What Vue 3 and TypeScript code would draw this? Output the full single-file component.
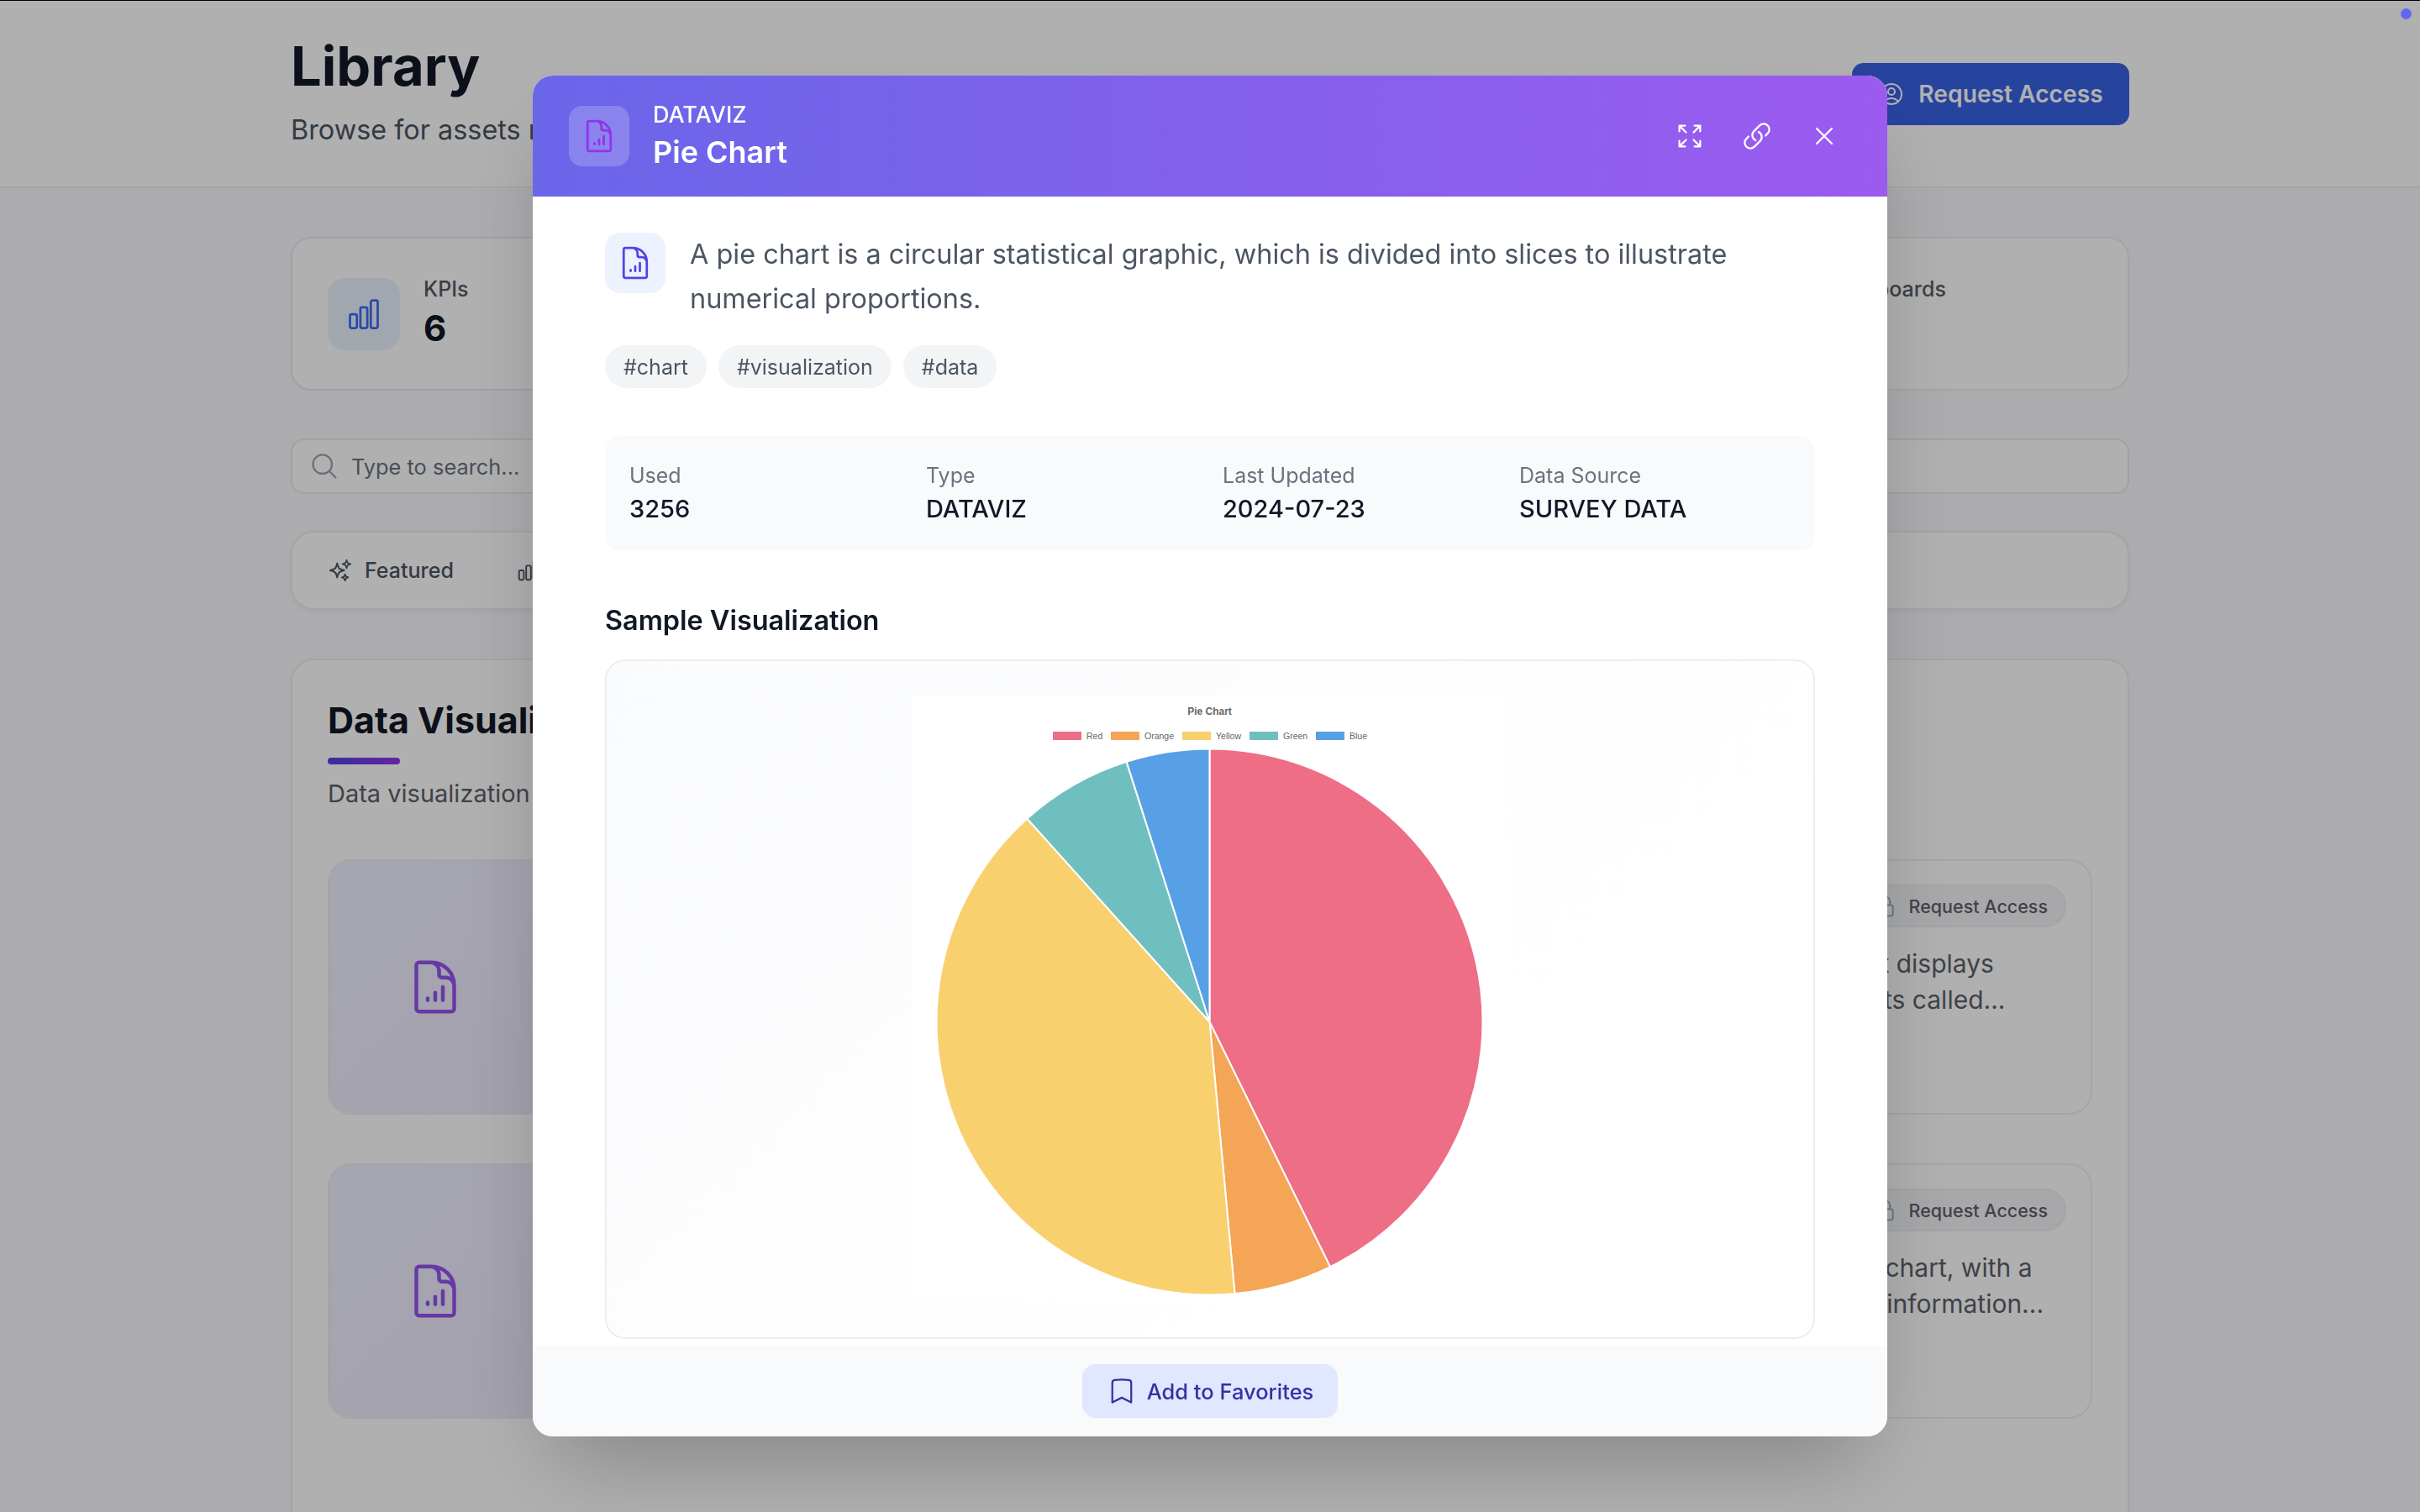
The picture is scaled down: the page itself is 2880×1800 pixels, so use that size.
<script setup lang="ts">
const docBars =
  'M19.5 14.25v-2.625a3.375 3.375 0 0 0-3.375-3.375h-1.5A1.125 1.125 0 0 1 13.5 7.125v-1.5a3.375 3.375 0 0 0-3.375-3.375H8.25M9 16.5v.75m3-3v3M15 12v5.25m-4.5-15H5.625c-.621 0-1.125.504-1.125 1.125v17.25c0 .621.504 1.125 1.125 1.125h12.75c.621 0 1.125-.504 1.125-1.125V11.25a9 9 0 0 0-9-9Z'
const chartBar =
  'M3 13.125C3 12.504 3.504 12 4.125 12h2.25c.621 0 1.125.504 1.125 1.125v6.75C7.5 20.496 6.996 21 6.375 21h-2.25A1.125 1.125 0 0 1 3 19.875v-6.75ZM9.75 8.625c0-.621.504-1.125 1.125-1.125h2.25c.621 0 1.125.504 1.125 1.125v11.25c0 .621-.504 1.125-1.125 1.125h-2.25a1.125 1.125 0 0 1-1.125-1.125V8.625ZM16.5 4.125c0-.621.504-1.125 1.125-1.125h2.25C20.496 3 21 3.504 21 4.125v15.75c0 .621-.504 1.125-1.125 1.125h-2.25a1.125 1.125 0 0 1-1.125-1.125V4.125Z'
const sparkles =
  'M9.813 15.904 9 18.75l-.813-2.846a4.5 4.5 0 0 0-3.09-3.09L2.25 12l2.846-.813a4.5 4.5 0 0 0 3.09-3.09L9 5.25l.813 2.846a4.5 4.5 0 0 0 3.09 3.09L15.75 12l-2.846.813a4.5 4.5 0 0 0-3.09 3.09ZM18.259 8.715 18 9.75l-.259-1.035a3.375 3.375 0 0 0-2.455-2.456L14.25 6l1.036-.259a3.375 3.375 0 0 0 2.455-2.456L18 2.25l.259 1.035a3.375 3.375 0 0 0 2.456 2.456L21.75 6l-1.035.259a3.375 3.375 0 0 0-2.456 2.456ZM16.894 20.567 16.5 21.75l-.394-1.183a2.25 2.25 0 0 0-1.423-1.423L13.5 18.75l1.183-.394a2.25 2.25 0 0 0 1.423-1.423l.394-1.183.394 1.183a2.25 2.25 0 0 0 1.423 1.423l1.183.394-1.183.394a2.25 2.25 0 0 0-1.423 1.423Z'
const lock =
  'M16.5 10.5V6.75a4.5 4.5 0 1 0-9 0v3.75m-.75 11.25h10.5a2.25 2.25 0 0 0 2.25-2.25v-6.75a2.25 2.25 0 0 0-2.25-2.25H6.75a2.25 2.25 0 0 0-2.25 2.25v6.75a2.25 2.25 0 0 0 2.25 2.25Z'

const stats = [
  { label: 'KPIs', value: '6', tone: 'blue' },
  { label: 'Layouts', value: '4', tone: 'green' },
  { label: 'Storyboards', value: '3', tone: 'amber' },
  { label: 'Dashboards', value: '5', tone: 'pink' },
]

const assets = [
  { title: 'Pie Chart', lines: ['A pie chart is a circular statistical graphic', 'which is divided into slices...'] },
  { title: 'Bubble Chart', lines: ['A bubble chart is a graph type, that displays', 'three dimensions of your data points called...'] },
  { title: 'Bar Chart', lines: ['A bar chart presents categorical data', 'with rectangular bars...'] },
  { title: 'Donut Chart', lines: ['A doughnut chart is a family of pie chart, with a', 'hole in the very center to put extra information...'] },
]

const meta = [
  { label: 'Used', value: '3256' },
  { label: 'Type', value: 'DATAVIZ' },
  { label: 'Last Updated', value: '2024-07-23' },
  { label: 'Data Source', value: 'SURVEY DATA' },
]

const tags = ['#chart', '#visualization', '#data']

const cx = 354.5
const cy = 387.5
const r = 325

function slice(from: number, to: number) {
  const a = ((from - 90) * Math.PI) / 180
  const b = ((to - 90) * Math.PI) / 180
  const large = to - from > 180 ? 1 : 0
  return `M${cx} ${cy}L${cx + r * Math.cos(a)} ${cy + r * Math.sin(a)}A${r} ${r} 0 ${large} 1 ${cx + r * Math.cos(b)} ${cy + r * Math.sin(b)}Z`
}

const slices = [
  { name: 'Red', color: '#ee6e85', from: 0, to: 153.8, box: 168, text: 208 },
  { name: 'Orange', color: '#f4a556', from: 153.8, to: 174.7, box: 237, text: 277 },
  { name: 'Yellow', color: '#f8d06e', from: 174.7, to: 318.1, box: 322, text: 362 },
  { name: 'Green', color: '#70bfc0', from: 318.1, to: 342.3, box: 402, text: 442 },
  { name: 'Blue', color: '#57a0e5', from: 342.3, to: 360, box: 481, text: 521 },
]
</script>

<template>
  <div class="page">
    <header class="topbar">
      <div class="wrap topbar-row">
        <div>
          <h1>Library</h1>
          <p class="lead">Browse for assets required for your analysis and reports.</p>
        </div>
        <button class="cta" type="button">
          <svg class="ic32" viewBox="0 0 24 24" fill="none" stroke="currentColor" stroke-width="1.5">
            <path stroke-linecap="round" stroke-linejoin="round" d="M17.982 18.725A7.488 7.488 0 0 0 12 15.75a7.488 7.488 0 0 0-5.982 2.975m11.963 0a9 9 0 1 0-11.963 0m11.963 0A8.966 8.966 0 0 1 12 21a8.966 8.966 0 0 1-5.982-2.275M15 9.75a3 3 0 1 1-6 0 3 3 0 0 1 6 0Z" />
          </svg>
          Request Access
        </button>
      </div>
    </header>

    <main class="wrap">
      <section class="stats">
        <div v-for="s in stats" :key="s.label" class="stat" :class="s.tone">
          <div class="stat-icon">
            <svg viewBox="0 0 24 24" fill="none" stroke="currentColor" stroke-width="1.5">
              <path stroke-linecap="round" stroke-linejoin="round" :d="chartBar" />
            </svg>
          </div>
          <div class="stat-text">
            <div class="stat-label">{{ s.label }}</div>
            <div class="stat-value">{{ s.value }}</div>
          </div>
        </div>
      </section>

      <div class="search">
        <svg viewBox="0 0 24 24" fill="none" stroke="currentColor" stroke-width="1.5">
          <path stroke-linecap="round" stroke-linejoin="round" d="m21 21-5.197-5.197m0 0A7.5 7.5 0 1 0 5.196 5.196a7.5 7.5 0 0 0 10.607 10.607Z" />
        </svg>
        <span>Type to search...</span>
      </div>

      <nav class="tabs">
        <span class="tab">
          <svg viewBox="0 0 24 24" fill="none" stroke="currentColor" stroke-width="1.5">
            <path stroke-linecap="round" stroke-linejoin="round" :d="sparkles" />
          </svg>
          Featured
        </span>
        <span class="tab">
          <svg viewBox="0 0 24 24" fill="none" stroke="currentColor" stroke-width="1.5">
            <path stroke-linecap="round" stroke-linejoin="round" :d="chartBar" />
          </svg>
          KPIs
        </span>
      </nav>

      <section class="panel">
        <h2>Data Visualizations</h2>
        <div class="rule"></div>
        <p class="panel-sub">Data visualization assets for charts and graphs</p>
        <div class="assets">
          <article v-for="a in assets" :key="a.title" class="asset">
            <div class="thumb">
              <svg viewBox="0 0 24 24" fill="none" stroke="currentColor" stroke-width="1.5">
                <path stroke-linecap="round" stroke-linejoin="round" :d="docBars" />
              </svg>
            </div>
            <div class="asset-body">
              <div class="asset-top">
                <h3>{{ a.title }}</h3>
                <span class="pill">
                  <svg viewBox="0 0 24 24" fill="none" stroke="currentColor" stroke-width="1.5">
                    <path stroke-linecap="round" stroke-linejoin="round" :d="lock" />
                  </svg>
                  Request Access
                </span>
              </div>
              <p class="asset-desc">
                <span v-for="l in a.lines" :key="l">{{ l }}</span>
              </p>
            </div>
          </article>
        </div>
      </section>
    </main>
  </div>

  <div class="overlay">
    <div class="modal">
      <header class="modal-head">
        <div class="head-icon">
          <svg viewBox="0 0 24 24" fill="none" stroke="currentColor" stroke-width="1.5">
            <path stroke-linecap="round" stroke-linejoin="round" :d="docBars" />
          </svg>
        </div>
        <div class="head-text">
          <div class="eyebrow">DATAVIZ</div>
          <div class="modal-title">Pie Chart</div>
        </div>
        <div class="head-actions">
          <svg viewBox="0 0 24 24" fill="none" stroke="currentColor" stroke-width="1.5">
            <path stroke-linecap="round" stroke-linejoin="round" d="M3.75 3.75v4.5m0-4.5h4.5m-4.5 0L9 9M3.75 20.25v-4.5m0 4.5h4.5m-4.5 0L9 15M20.25 3.75h-4.5m4.5 0v4.5m0-4.5L15 9m5.25 11.25h-4.5m4.5 0v-4.5m0 4.5L15 15" />
          </svg>
          <svg viewBox="0 0 24 24" fill="none" stroke="currentColor" stroke-width="1.5">
            <path stroke-linecap="round" stroke-linejoin="round" d="M13.19 8.688a4.5 4.5 0 0 1 1.242 7.244l-4.5 4.5a4.5 4.5 0 0 1-6.364-6.364l1.757-1.757m13.35-.622 1.757-1.757a4.5 4.5 0 0 0-6.364-6.364l-4.5 4.5a4.5 4.5 0 0 0 1.242 7.244" />
          </svg>
          <svg viewBox="0 0 24 24" fill="none" stroke="currentColor" stroke-width="1.5">
            <path stroke-linecap="round" stroke-linejoin="round" d="M6 18 18 6M6 6l12 12" />
          </svg>
        </div>
      </header>

      <div class="modal-body">
        <div class="intro">
          <div class="intro-icon">
            <svg viewBox="0 0 24 24" fill="none" stroke="currentColor" stroke-width="1.5">
              <path stroke-linecap="round" stroke-linejoin="round" :d="docBars" />
            </svg>
          </div>
          <p>A pie chart is a circular statistical graphic, which is divided into slices to illustrate numerical proportions.</p>
        </div>

        <div class="tags">
          <span v-for="t in tags" :key="t" class="tag">{{ t }}</span>
        </div>

        <dl class="meta">
          <div v-for="m in meta" :key="m.label">
            <dt>{{ m.label }}</dt>
            <dd>{{ m.value }}</dd>
          </div>
        </dl>

        <h4>Sample Visualization</h4>

        <div class="viz">
          <svg class="pie" viewBox="0 0 711 720">
            <rect width="711" height="720" fill="#fff" />
            <text x="354.5" y="22" text-anchor="middle" class="pie-title">Pie Chart</text>
            <g v-for="s in slices" :key="s.name">
              <rect :x="s.box" y="42" width="34" height="10" :fill="s.color" />
              <text :x="s.text" y="51" class="pie-legend">{{ s.name }}</text>
              <path :d="slice(s.from, s.to)" :fill="s.color" stroke="#fff" stroke-width="2" />
            </g>
          </svg>
        </div>
      </div>

      <footer class="modal-foot">
        <button class="fav" type="button">
          <svg viewBox="0 0 24 24" fill="none" stroke="currentColor" stroke-width="1.5">
            <path stroke-linecap="round" stroke-linejoin="round" d="M17.593 3.322c1.1.128 1.907 1.077 1.907 2.185V21L12 17.25 4.5 21V5.507c0-1.108.806-2.057 1.907-2.185a48.507 48.507 0 0 1 11.186 0Z" />
          </svg>
          Add to Favorites
        </button>
      </footer>
    </div>
  </div>

  <div class="dot"></div>
</template>

<style>
html,
body {
  margin: 0;
  height: 100%;
  overflow: hidden;
  background: #f9f9fc;
}
</style>

<style scoped>
* {
  box-sizing: border-box;
}

.page {
  height: 1800px;
  overflow: hidden;
  font-family: Inter, "Liberation Sans", sans-serif;
  color: #111827;
  border-top: 1px solid #000;
}

.wrap {
  width: 2188px;
  margin: 0 auto;
}

.topbar {
  height: 223px;
  background: #fff;
  border-bottom: 2px solid #f0f0f2;
}

.topbar-row {
  display: flex;
  justify-content: space-between;
  align-items: flex-start;
  padding-top: 36px;
}

h1 {
  margin: 0;
  font-size: 65px;
  line-height: 84px;
  font-weight: 700;
}

.lead {
  margin: 12px 0 0;
  font-size: 32.4px;
  line-height: 44px;
  color: #4b5563;
}

.cta {
  margin-top: 38px;
  height: 74px;
  width: 330px;
  display: flex;
  align-items: center;
  justify-content: center;
  gap: 16px;
  border: 0;
  border-radius: 14px;
  background: #3861e5;
  color: #fff;
  font: 600 28.2px Inter, sans-serif;
}

.ic32 {
  width: 32px;
  height: 32px;
}

.stats {
  margin-top: 58px;
  display: grid;
  grid-template-columns: repeat(4, 1fr);
  gap: 36px;
}

.stat {
  height: 183px;
  padding: 47px 42px;
  display: flex;
  gap: 28px;
  background: #fff;
  border: 2px solid #e5e7eb;
  border-radius: 24px;
}

.stat.blue {
  border-color: #e3ebf7;
}

.stat.pink {
  border-color: #f6e8ef;
}

.stat-icon {
  width: 86px;
  height: 86px;
  flex: none;
  display: flex;
  align-items: center;
  justify-content: center;
  background: #eaf2fe;
  border-radius: 20px;
  color: #3e6af3;
}

.stat-icon svg {
  width: 44px;
  height: 44px;
}

.stat-text {
  margin-top: -4px;
}

.stat-label {
  font-size: 25px;
  line-height: 34px;
  font-weight: 500;
  color: #555b66;
}

.stat-value {
  margin-top: 5px;
  font-size: 42px;
  line-height: 50px;
  font-weight: 700;
}

.search {
  margin-top: 57px;
  height: 66px;
  padding: 0 20px;
  display: flex;
  align-items: center;
  gap: 14px;
  background: #fff;
  border: 2px solid #e8e9ef;
  border-radius: 16px;
  font-size: 25.4px;
  color: #6b7280;
}

.search svg {
  width: 36px;
  height: 36px;
  color: #9ca3af;
}

.tabs {
  margin-top: 44px;
  height: 94px;
  padding: 0 42px;
  display: flex;
  align-items: center;
  gap: 74px;
  background: #fff;
  border: 2px solid #eceef1;
  border-radius: 28px;
  box-shadow: 0 2px 6px rgba(0, 0, 0, 0.05);
}

.tab {
  display: flex;
  align-items: center;
  gap: 14px;
  font-size: 25px;
  font-weight: 500;
  color: #4b5563;
}

.tab svg {
  width: 30px;
  height: 30px;
}

.panel {
  margin-top: 58px;
  height: 1200px;
  padding: 42px;
  background: #fff;
  border: 2px solid #eceef1;
  border-radius: 28px;
}

h2 {
  margin: 0;
  font-size: 43px;
  line-height: 58px;
  font-weight: 700;
}

.rule {
  margin-top: 16px;
  width: 86px;
  height: 8px;
  border-radius: 4px;
  background: linear-gradient(90deg, #4f46e5, #9333ea);
}

.panel-sub {
  margin: 13px 0 0;
  font-size: 29px;
  line-height: 44px;
  color: #5c6069;
}

.assets {
  margin-top: 56px;
  display: grid;
  grid-template-columns: 1fr 1fr;
  column-gap: 44px;
  row-gap: 58px;
}

.asset {
  height: 304px;
  display: flex;
  background: #fff;
  border: 2px solid #eceef1;
  border-radius: 28px;
  overflow: hidden;
}

.thumb {
  width: 252px;
  flex: none;
  display: flex;
  align-items: center;
  justify-content: center;
  background: linear-gradient(135deg, #eff2ff, #efe9fe);
  color: #9355ef;
}

.thumb svg {
  width: 72px;
  height: 72px;
}

.asset-body {
  flex: 1;
  padding: 28px 29px 28px 33px;
}

.asset-top {
  display: flex;
  justify-content: space-between;
  align-items: center;
}

h3 {
  margin: 0;
  font-size: 32px;
  font-weight: 600;
}

.pill {
  height: 51px;
  padding: 0 20px;
  display: flex;
  align-items: center;
  gap: 14px;
  background: #f3f4f6;
  border: 2px solid #eceef1;
  border-radius: 26px;
  font-size: 21.5px;
  font-weight: 500;
  color: #5c6069;
}

.pill svg {
  width: 28px;
  height: 28px;
  color: #9ca3af;
}

.asset-desc {
  margin: 22px 0 0;
  font-size: 30px;
  line-height: 43px;
  color: #5c6069;
}

.asset-desc span {
  display: block;
  white-space: nowrap;
}

.overlay {
  position: fixed;
  inset: 0;
  display: flex;
  align-items: center;
  justify-content: center;
  background: rgba(0, 0, 0, 0.31);
  font-family: Inter, "Liberation Sans", sans-serif;
}

.modal {
  width: 1612px;
  height: 1620px;
  display: flex;
  flex-direction: column;
  background: #fff;
  border-radius: 24px;
  overflow: hidden;
  box-shadow: 0 50px 100px -24px rgba(0, 0, 0, 0.25);
}

.modal-head {
  height: 144px;
  flex: none;
  padding: 0 43px;
  display: flex;
  align-items: center;
  gap: 28px;
  background: linear-gradient(90deg, #6a66e9, #9b5bef);
  color: #fff;
}

.head-icon {
  width: 72px;
  height: 72px;
  display: flex;
  align-items: center;
  justify-content: center;
  background: rgba(255, 255, 255, 0.2);
  border-radius: 16px;
  color: #9333ea;
}

.head-icon svg,
.intro-icon svg {
  width: 44px;
  height: 44px;
}

.eyebrow {
  font-size: 27px;
  line-height: 34px;
  font-weight: 500;
}

.modal-title {
  margin-top: 4px;
  font-size: 36px;
  line-height: 46px;
  font-weight: 600;
}

.head-actions {
  margin-left: auto;
  display: flex;
  align-items: center;
  gap: 44px;
  padding-right: 14px;
}

.head-actions svg {
  width: 36px;
  height: 36px;
}

.modal-body {
  flex: 1;
  min-height: 0;
  overflow: hidden;
  padding: 43px 86px 0;
}

.intro {
  display: flex;
  gap: 29px;
}

.intro-icon {
  width: 72px;
  height: 72px;
  flex: none;
  display: flex;
  align-items: center;
  justify-content: center;
  background: #eef2ff;
  border-radius: 18px;
  color: #4f46e5;
}

.intro p {
  margin: -1px 0 0;
  font-size: 32.4px;
  line-height: 53px;
  color: #4b5563;
}

.tags {
  margin-top: 29px;
  display: flex;
  gap: 14px;
}

.tag {
  height: 51px;
  padding: 0 22px;
  display: flex;
  align-items: center;
  background: #f3f4f6;
  border-radius: 26px;
  font-size: 25px;
  color: #4b5563;
}

.meta {
  margin: 57px 0 0;
  height: 137px;
  padding: 29px;
  display: grid;
  grid-template-columns: repeat(4, 1fr);
  gap: 30px;
  background: #f9fafb;
  border-radius: 20px;
}

dt {
  font-size: 25px;
  line-height: 36px;
  color: #6b7280;
}

dd {
  margin: 3px 0 0;
  font-size: 29px;
  line-height: 38px;
  font-weight: 500;
  color: #111827;
}

h4 {
  margin: 61px 0 0;
  font-size: 32.4px;
  line-height: 44px;
  font-weight: 600;
  color: #111827;
}

.viz {
  margin-top: 24px;
  height: 809px;
  padding-top: 42px;
  display: flex;
  justify-content: center;
  background: linear-gradient(135deg, #fafbfd, #fff 70%);
  border: 2px solid #eceef1;
  border-radius: 24px;
}

.pie {
  width: 711px;
  height: 720px;
}

.pie-title {
  font: 700 12px "Liberation Sans", sans-serif;
  fill: #666;
}

.pie-legend {
  font: 400 10.5px "Liberation Sans", sans-serif;
  fill: #666;
}

.modal-foot {
  height: 108px;
  flex: none;
  display: flex;
  align-items: center;
  justify-content: center;
  background: #f9fafb;
}

.fav {
  width: 304px;
  height: 64px;
  display: flex;
  align-items: center;
  justify-content: center;
  gap: 12px;
  border: 0;
  border-radius: 16px;
  background: #e0e7ff;
  color: #3730a3;
  font: 500 25.5px Inter, sans-serif;
}

.fav svg {
  width: 36px;
  height: 36px;
}

.dot {
  position: fixed;
  top: 10px;
  right: 10px;
  width: 13px;
  height: 13px;
  border-radius: 50%;
  background: #6366f1;
}
</style>
